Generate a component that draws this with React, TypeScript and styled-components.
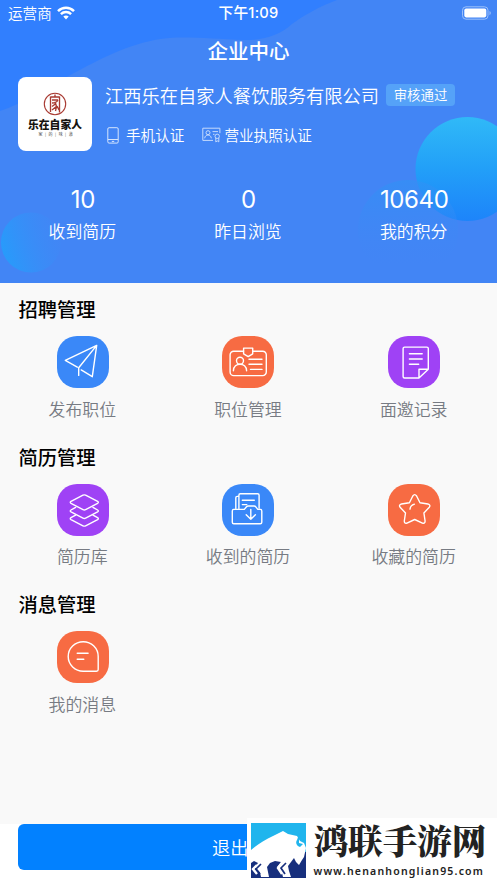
import React from 'react';
import styled, { createGlobalStyle } from 'styled-components';

const GlobalStyle = createGlobalStyle`
  * { box-sizing: border-box; }
  body {
    margin: 0;
    background: #f9f9f9;
    font-family: "Noto Sans CJK SC", "Noto Sans", sans-serif;
  }
`;

const Page = styled.div`
  position: relative;
  display: flex;
  flex-direction: column;
  width: 497px;
  height: 883px;
  overflow: hidden;
  background: #f9f9f9;
`;

const Header = styled.header`
  position: relative;
  height: 283px;
  background: #4285f5;
  color: #fff;
`;

const Backdrop = styled.svg`
  position: absolute;
  inset: 0;
`;

const HeaderContent = styled.div`
  position: relative;
  display: flex;
  flex-direction: column;
`;

const StatusBar = styled.div`
  display: grid;
  grid-template-columns: 1fr auto 1fr;
  align-items: center;
  height: 26px;
  padding: 0 5px 0 8px;
  font-size: 14.6px;
  line-height: 26px;
`;

const Carrier = styled.div`
  display: flex;
  align-items: center;
  gap: 5px;
  font-weight: 350;
`;

const Clock = styled.div`
  margin-right: 3px;
  font-family: Inter, "Noto Sans CJK SC", sans-serif;
  font-size: 14.7px;
  font-weight: 500;
  letter-spacing: 0.2px;
`;

const BatteryIcon = styled.svg`
  justify-self: end;
`;

const Title = styled.h1`
  margin: 0;
  height: 51px;
  font-size: 20.5px;
  font-weight: 500;
  line-height: 49px;
  text-align: center;
`;

const Company = styled.section`
  display: flex;
  gap: 13px;
  height: 74px;
  padding: 0 18px;
`;

const Logo = styled.div`
  display: flex;
  flex-direction: column;
  align-items: center;
  flex: none;
  width: 74px;
  height: 74px;
  padding-top: 15px;
  border-radius: 8px;
  background: #fff;
`;

const LogoName = styled.div`
  margin-top: 1px;
  color: #15130f;
  font-size: 10.8px;
  font-weight: 900;
  line-height: 14px;
  white-space: nowrap;
`;

const LogoMotto = styled.div`
  padding-left: 2px;
  color: #444;
  font-size: 4px;
  line-height: 6px;
  letter-spacing: 0.8px;
  white-space: nowrap;
`;

const CompanyInfo = styled.div`
  display: flex;
  flex-direction: column;
  gap: 12px;
`;

const NameRow = styled.div`
  display: flex;
  align-items: center;
  gap: 7px;
  height: 36px;
`;

const CompanyName = styled.div`
  margin-top: -1px;
  font-size: 18.27px;
  font-weight: 350;
  white-space: nowrap;
`;

const Badge = styled.span`
  width: 69px;
  height: 22px;
  border-radius: 4px;
  background: #55a2f8;
  font-size: 13.4px;
  font-weight: 350;
  line-height: 20px;
  text-align: center;
  white-space: nowrap;
`;

const CertRow = styled.div`
  display: flex;
  gap: 18px;
  height: 20px;
  padding-left: 2px;
`;

const Cert = styled.div<{ $gap: number }>`
  display: flex;
  align-items: center;
  gap: ${({ $gap }) => $gap}px;
  font-size: 14.6px;
  font-weight: 350;
  line-height: 20px;
  white-space: nowrap;
`;

const Stats = styled.section`
  display: grid;
  grid-template-columns: repeat(3, 1fr);
  padding-top: 34px;
  text-align: center;
`;

const StatValue = styled.div`
  font-family: Inter, sans-serif;
  font-size: 24px;
  font-weight: 370;
  letter-spacing: -0.4px;
  line-height: 30px;
`;

const StatLabel = styled.div`
  margin-top: 3px;
  padding-right: 1px;
  font-size: 16.9px;
  font-weight: 350;
  line-height: 26px;
`;

const Content = styled.main`
  flex: 1;
  padding-top: 12.2px;
`;

const Section = styled.section`
  height: 147.5px;
`;

const SectionTitle = styled.h2`
  margin: 0;
  padding-left: 18.5px;
  font-size: 19.3px;
  font-weight: 500;
  line-height: 28px;
  color: #000;
`;

const Grid = styled.div`
  display: grid;
  grid-template-columns: repeat(3, 1fr);
  margin-top: 13px;
`;

const Entry = styled.div`
  display: flex;
  flex-direction: column;
  align-items: center;
`;

const Tile = styled.div<{ $color: string }>`
  width: 52px;
  height: 52px;
  border-radius: 20px;
  background: ${({ $color }) => $color};

  svg {
    display: block;
    fill: none;
    stroke: #fff;
    stroke-width: 1.4;
    stroke-linecap: round;
    stroke-linejoin: round;
  }
`;

const EntryLabel = styled.div`
  margin-top: 7.8px;
  padding-right: 1px;
  color: #777b83;
  font-size: 16.9px;
  font-weight: 350;
  line-height: 26px;
`;

const Footer = styled.footer`
  height: 59px;
  padding: 0 18px;
  background: #fff;
`;

const LogoutButton = styled.button`
  display: block;
  width: 100%;
  height: 46px;
  padding: 0;
  border: 0;
  border-radius: 6px;
  background: #0281ff;
  color: #fff;
  font-family: inherit;
  font-size: 18.2px;
  font-weight: 350;
  line-height: 44px;
`;

const SiteMark = styled.aside`
  position: absolute;
  right: 0;
  bottom: 0;
  display: flex;
  gap: 7.5px;
  width: 250px;
  height: 65px;
  padding: 5px 0 0 4px;
  background: #fff;
`;

const SiteText = styled.div`
  display: flex;
  flex-direction: column;
`;

const SiteName = styled.div`
  height: 41px;
  color: #222;
  font-family: "Noto Serif CJK SC", "Noto Sans CJK SC", serif;
  font-size: 34.6px;
  font-weight: 900;
  line-height: 32px;
  white-space: nowrap;
`;

const SiteUrl = styled.div`
  color: #222;
  font-family: "Noto Sans", sans-serif;
  font-size: 10.5px;
  font-weight: 600;
  line-height: 14px;
  letter-spacing: 1.2px;
  white-space: nowrap;
`;

const PlaneIcon = () => (
  <svg width="52" height="52">
    <path d="M20.3 31.2 8.3 24.4 39.7 9.4 35.3 40.7 24.2 33.9M39.7 9.4 21.7 31.8v7.6" />
  </svg>
);

const CardIcon = () => (
  <svg width="52" height="52">
    <path d="M21.5 15.2H11.7a3.6 3.6 0 0 0-3.6 3.6V36a3.6 3.6 0 0 0 3.6 3.6h29a3.6 3.6 0 0 0 3.6-3.6V18.8a3.6 3.6 0 0 0-3.6-3.6H30.6" />
    <path d="M21.6 12.1h9.1v5.7L26.2 20.6 21.6 17.8zM27 23.2h13M27 28.3h13M28.5 33.4H40" />
    <circle cx="18" cy="24.7" r="3.5" />
    <path d="M11.4 34.8c0-8.8 13.2-8.8 13.2 0" />
  </svg>
);

const NoteIcon = () => (
  <svg width="52" height="52">
    <path d="M31 42H16.6a1.5 1.5 0 0 1-1.5-1.5V12.6a1.5 1.5 0 0 1 1.5-1.5h22.2a1.5 1.5 0 0 1 1.5 1.5v20.7L31 42v-8.7h9.3" />
    <path d="M21.4 17.7h12.8M21.4 23h12.8M21.4 28.3h9.3" />
  </svg>
);

const LayersIcon = () => (
  <svg width="52" height="52">
    <path d="M26 11.2q1.3-.7 2.6 0l12 6.2q1.5.9 0 1.9l-12 6.3q-1.3.7-2.6 0l-12-6.3q-1.5-1 0-1.9z" />
    <path d="M18.6 23.4 14 26q-1.5 1 0 1.9l12 6.3q1.3.7 2.6 0l12-6.3q1.5-.9 0-1.9L36 23.4" />
    <path d="M18.6 31.2 14 33.7q-1.5 1 0 1.9l12 6.2q1.3.7 2.6 0l12-6.2q1.5-.9 0-1.9L36 31.2" />
  </svg>
);

const FolderIcon = () => (
  <svg width="52" height="52">
    <path d="M16.9 24.6V11.2q0-1.4 1.4-1.4h17.4q1.4 0 1.4 1.4v13M16.5 12.4h-1.3q-1.4 0-1.4 1.4v10.6M20.3 16.3h12M20.3 20.6h4.5" />
    <path d="M11.8 25.4h10.5l2.2-2.7q.6-.7 1.5-.7h6.2q1 0 1.6.8l2 2.6h2.5q1.5 0 1.5 1.5v11.4q0 1.5-1.5 1.5H11.8q-1.5 0-1.5-1.5V26.9q0-1.5 1.5-1.5z" />
    <path d="M28.8 25.4v9.8M24.2 30.7l4.6 4.6 4.6-4.6" />
  </svg>
);

const StarIcon = () => (
  <svg width="52" height="52">
    <path d="M24.8 12q1.9-2.8 3.8 0l3.4 6.7 7.9 1.3q3 .8 1.4 3.2l-5.4 5.8 1.2 8q0 3-2.7 2.1L26.7 35.5 19 39.1q-2.7.9-2.7-2.1l1.2-8-5.4-5.8q-1.6-2.4 1.4-3.2l7.9-1.3z" />
    <path d="M22 25.1q.5-3.7 4.4-4.9" />
  </svg>
);

const ChatIcon = () => (
  <svg width="52" height="52">
    <path d="M41.2 25.6v13q0 1.7-1.7 1.7H26.3a15 14.8 0 1 1 14.9-14.7z" />
    <path d="M20.2 22.2h10.9M20.2 28.3h6.6" />
  </svg>
);

const blue = '#3a88f8';
const orange = '#f76b43';
const purple = '#9f42f5';

const sections = [
  {
    title: '招聘管理',
    entries: [
      { label: '发布职位', color: blue, Icon: PlaneIcon },
      { label: '职位管理', color: orange, Icon: CardIcon },
      { label: '面邀记录', color: purple, Icon: NoteIcon },
    ],
  },
  {
    title: '简历管理',
    entries: [
      { label: '简历库', color: purple, Icon: LayersIcon },
      { label: '收到的简历', color: blue, Icon: FolderIcon },
      { label: '收藏的简历', color: orange, Icon: StarIcon },
    ],
  },
  {
    title: '消息管理',
    entries: [{ label: '我的消息', color: orange, Icon: ChatIcon }],
  },
];

const stats = [
  { value: '10', label: '收到简历' },
  { value: '0', label: '昨日浏览' },
  { value: '10640', label: '我的积分' },
];

const HeaderBackdrop = () => (
  <Backdrop width="497" height="283">
    <defs>
      <linearGradient id="bright" x1="0" y1="0" x2="0" y2="1">
        <stop offset="0" stopColor="#30b9f7" />
        <stop offset="0.5" stopColor="#229ff8" />
        <stop offset="1" stopColor="#1d84fa" />
      </linearGradient>
      <linearGradient id="faint" x1="0" y1="0" x2="0" y2="1">
        <stop offset="0" stopColor="#2f92f5" stopOpacity="0.6" />
        <stop offset="0.9" stopColor="#4285f5" stopOpacity="0" />
      </linearGradient>
      <linearGradient id="left" x1="0" y1="0.65" x2="1" y2="0.35">
        <stop offset="0" stopColor="#269cfb" />
        <stop offset="1" stopColor="#4088f6" stopOpacity="0.3" />
      </linearGradient>
    </defs>
    <path
      d="M0 0H337C318 7 303 16 292 24C279 36 263 40 245 40C218 39 198 37 176 37.5C139 39 108 55 74 73C48 87 24 103 0 111Z"
      fill="#317ffe"
    />
    <circle cx="467.5" cy="169" r="52" fill="url(#bright)" />
    <circle cx="408" cy="230" r="50" fill="url(#faint)" />
    <circle cx="31" cy="242.5" r="30" fill="url(#left)" />
  </Backdrop>
);

const WifiIcon = () => (
  <svg width="18" height="14" viewBox="0 0 18 14" fill="none" stroke="#fff" strokeWidth="2.5">
    <path d="M1 5.1C5.6.6 12.4.6 17 5.1" />
    <path d="M3.9 8.2c2.9-2.8 7.3-2.8 10.2 0" />
    <path d="M9 13.4 6.3 10.6c1.5-1.4 3.9-1.4 5.4 0z" fill="#fff" stroke="none" />
  </svg>
);

const Seal = () => (
  <svg width="24" height="24" viewBox="0 0 24 24" fill="none" stroke="#a83a32">
    <circle cx="12" cy="12" r="10.7" strokeWidth="1.1" />
    <path
      d="M7.5 20V4.5M7.5 5h9.2M16.5 4.5v16M12 2.5v2.5M9 8h6M9 11c3 0 5-1 6-3M9 14.5l4-3M9 18l5-4M11.5 10c3 3 2 6 1 9M14 14l2 4"
      strokeWidth="1.35"
    />
  </svg>
);

const PhoneIcon = () => (
  <svg width="12" height="17" viewBox="0 0 12 17" fill="none" stroke="#d6e5fd" strokeWidth="1">
    <rect x="0.8" y="0.7" width="10.4" height="15.4" rx="1.3" />
    <path d="M1 12.5h10M4.8 14.4h2.4" />
  </svg>
);

const LicenseIcon = () => (
  <svg width="19" height="16" viewBox="0 0 19 16" fill="none" stroke="#c5dafc" strokeWidth="1">
    <path d="M11 13.4H.8V1.2h17.1v5" />
    <circle cx="6" cy="5.7" r="2" />
    <path d="M2.7 11.3c.3-4.4 6.3-4.4 6.6 0M10.5 4.6H16M11 7.3h1.5" />
    <circle cx="15.2" cy="9.3" r="2.2" />
    <path d="M13.8 11v3.9l1.5-1 1.5 1V11" />
  </svg>
);

const BisonLogo = () => (
  <svg width="55" height="55" viewBox="0 0 55 55">
    <path fill="#20b5ed" d="M0 0h55v30H0z" />
    <path fill="#172f7d" d="M0 29h55v26H0z" />
    <path
      fill="#fff"
      d="M0 27C7 21 14 17 22 13L32 8 37 11 46 13 49 18 53 20 55 25 53 34 51 37 48 42 45 39 43 35 40 39 37 43 38 48 40 54H32L31 50 26 44 30 39 24 38 19 40 16 44 18 54H10L9 49 4 44 7 40 3 38 0 40Z"
    />
    <path fill="#20b5ed" d="M47 10c2 1 3 3 1 7v3l4 1-3 3c-3-1-5-4-3-7 1-3 2-4 1-7z" />
    <path
      fill="none"
      stroke="#fff"
      strokeWidth="2.4"
      d="m6 42-4 4 4 5M12 42l-4 4 4 5M31 40l-4 5 4 6M37 40l-4 5 4 6"
    />
    <path fill="none" stroke="#172f7d" strokeWidth="1.7" d="m10 41-5 5 4 5M35 40l-5 5 4 6" />
  </svg>
);

export default function App() {
  return (
    <>
      <GlobalStyle />
      <Page>
        <Header>
          <HeaderBackdrop />
          <HeaderContent>
            <StatusBar>
              <Carrier>
                运营商
                <WifiIcon />
              </Carrier>
              <Clock>下午1:09</Clock>
              <BatteryIcon width="30" height="14" viewBox="0 0 30 14">
                <rect x="0.5" y="0.8" width="25.5" height="12.4" rx="3.5" fill="none" stroke="#9cc0fa" />
                <rect x="2.3" y="2.6" width="22" height="8.8" rx="1.8" fill="#fff" />
                <path d="M27.5 5v4.2q1.3-.6 1.3-2.1T27.5 5z" fill="#9cc0fa" />
              </BatteryIcon>
            </StatusBar>
            <Title>企业中心</Title>
            <Company>
              <Logo>
                <Seal />
                <LogoName>乐在自家人</LogoName>
                <LogoMotto>家 | 的 | 味 | 道</LogoMotto>
              </Logo>
              <CompanyInfo>
                <NameRow>
                  <CompanyName>江西乐在自家人餐饮服务有限公司</CompanyName>
                  <Badge>审核通过</Badge>
                </NameRow>
                <CertRow>
                  <Cert $gap={7}>
                    <PhoneIcon />
                    手机认证
                  </Cert>
                  <Cert $gap={3}>
                    <LicenseIcon />
                    营业执照认证
                  </Cert>
                </CertRow>
              </CompanyInfo>
            </Company>
            <Stats>
              {stats.map(({ value, label }) => (
                <div key={label}>
                  <StatValue>{value}</StatValue>
                  <StatLabel>{label}</StatLabel>
                </div>
              ))}
            </Stats>
          </HeaderContent>
        </Header>
        <Content>
          {sections.map(({ title, entries }) => (
            <Section key={title}>
              <SectionTitle>{title}</SectionTitle>
              <Grid>
                {entries.map(({ label, color, Icon }) => (
                  <Entry key={label}>
                    <Tile $color={color}>
                      <Icon />
                    </Tile>
                    <EntryLabel>{label}</EntryLabel>
                  </Entry>
                ))}
              </Grid>
            </Section>
          ))}
        </Content>
        <Footer>
          <LogoutButton>退出登录</LogoutButton>
        </Footer>
        <SiteMark>
          <BisonLogo />
          <SiteText>
            <SiteName>鸿联手游网</SiteName>
            <SiteUrl>www.henanhonglian95.com</SiteUrl>
          </SiteText>
        </SiteMark>
      </Page>
    </>
  );
}
